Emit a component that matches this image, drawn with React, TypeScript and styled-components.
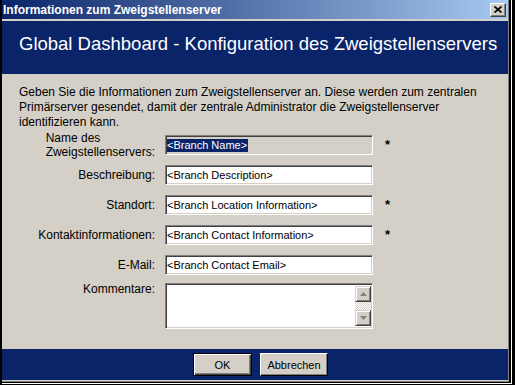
import styled, { createGlobalStyle } from "styled-components";

const GlobalStyle = createGlobalStyle`
  html, body {
    margin: 0;
    padding: 0;
    background: #000;
  }
  body {
    font-family: "Liberation Sans", Arial, sans-serif;
  }
`;

const fields = [
  { label: "Beschreibung:", value: "<Branch Description>", required: false },
  { label: "Standort:", value: "<Branch Location Information>", required: true },
  { label: "Kontaktinformationen:", value: "<Branch Contact Information>", required: true },
  { label: "E-Mail:", value: "<Branch Contact Email>", required: false },
];

const App = () => {
  return (
    <>
      <GlobalStyle />
      <Shell>
        <Highlight>
          <Shadow>
            <Edge>
              <TitleBar>
                <TitleText>Informationen zum Zweigstellenserver</TitleText>
                <CloseButton aria-label="Schließen">
                  <svg width="8" height="7" viewBox="0 0 8 7">
                    <path d="M0.5 0.5 L7.5 6.5 M7.5 0.5 L0.5 6.5" stroke="#000" strokeWidth="1.7" />
                  </svg>
                </CloseButton>
              </TitleBar>
              <TitleRule />
              <Banner>Global Dashboard - Konfiguration des Zweigstellenservers</Banner>
              <Body>
                <Intro>
                  Geben Sie die Informationen zum Zweigstellenserver an. Diese werden zum zentralen
                  Primärserver gesendet, damit der zentrale Administrator die Zweigstellenserver
                  identifizieren kann.
                </Intro>
                <Form>
                  <Label>
                    <LabelText>
                      Name des
                      <br />
                      Zweigstellenservers:
                    </LabelText>
                  </Label>
                  <SelectedField>
                    <Selection>&lt;Branch Name&gt;</Selection>
                  </SelectedField>
                  <Required>*</Required>

                  {fields.map((f) => (
                    <FieldRow key={f.label} {...f} />
                  ))}

                  <Label $top>
                    <LabelText>Kommentare:</LabelText>
                  </Label>
                  <CommentBox>
                    <CommentInput />
                    <ScrollBar>
                      <ScrollButton>
                        <svg width="7" height="4" viewBox="0 0 7 4">
                          <polygon points="3.5,0 7,4 0,4" fill="#808080" />
                        </svg>
                      </ScrollButton>
                      <ScrollTrack />
                      <ScrollButton>
                        <svg width="7" height="4" viewBox="0 0 7 4">
                          <polygon points="0,0 7,0 3.5,4" fill="#808080" />
                        </svg>
                      </ScrollButton>
                    </ScrollBar>
                  </CommentBox>
                  <span />
                </Form>
              </Body>
              <Footer>
                <Button $default $width={59}>OK</Button>
                <Button $width={68}>Abbrechen</Button>
              </Footer>
              <FooterRule />
            </Edge>
          </Shadow>
        </Highlight>
      </Shell>
    </>
  );
};

const FieldRow = ({ label, value, required }: { label: string; value: string; required: boolean }) => (
  <>
    <Label>
      <LabelText>{label}</LabelText>
    </Label>
    <Field defaultValue={value} />
    {required ? <Required>*</Required> : <span />}
  </>
);

// Fensterrahmen (klassischer Windows-Stil)
const Shell = styled.div`
  box-sizing: border-box;
  width: 515px;
  height: 385px;
  border-left: 2px solid #000;
  border-right: 3px solid #000;
  border-bottom: 1px solid #000;
  background: #000;
`;
const Highlight = styled.div`
  height: 100%;
  box-sizing: border-box;
  border-right: 1px solid #fff;
  border-bottom: 1px solid #fff;
`;
const Shadow = styled.div`
  height: 100%;
  box-sizing: border-box;
  border-right: 2px solid #000;
  border-bottom: 1px solid #000;
`;
const Edge = styled.div`
  height: 100%;
  box-sizing: border-box;
  border-right: 1px solid #808080;
  border-bottom: 1px solid #808080;
  display: flex;
  flex-direction: column;
  background: #d4d0c8;
`;

const TitleBar = styled.div`
  height: 19px;
  display: flex;
  align-items: center;
  justify-content: space-between;
  padding: 0 2px 0 1px;
  background: linear-gradient(to right, #0a246a, #a6caf0);
`;
const TitleText = styled.span`
  color: #fff;
  font-weight: bold;
  font-size: 12px;
  line-height: 14px;
`;
const CloseButton = styled.div`
  box-sizing: border-box;
  width: 16px;
  height: 14px;
  display: flex;
  align-items: center;
  justify-content: center;
  background: #d4d0c8;
  border-top: 1px solid #fff;
  border-left: 1px solid #fff;
  border-right: 1px solid #404040;
  border-bottom: 1px solid #404040;
  box-shadow: inset -1px -1px #808080;
`;
const TitleRule = styled.div`
  height: 2px;
  background: #d4d0c8;
`;

const Banner = styled.div`
  height: 53px;
  box-sizing: border-box;
  padding: 13px 0 0 17px;
  background: #0a246a;
  color: #fff;
  font-size: 18.5px;
  line-height: 19px;
  white-space: nowrap;
`;

const Body = styled.div`
  height: 275px;
  box-sizing: border-box;
  padding: 11px 10px 0 17px;
`;
const Intro = styled.p`
  margin: 0;
  font-size: 12px;
  line-height: 15px;
  color: #000;
`;

const Form = styled.div`
  display: grid;
  grid-template-columns: 136px 208px auto;
  grid-template-rows: repeat(5, 30px) auto;
  column-gap: 10px;
  align-items: center;
`;
const Label = styled.div<{ $top?: boolean }>`
  display: flex;
  justify-content: flex-end;
  align-self: ${(p) => (p.$top ? "start" : "center")};
  margin-top: ${(p) => (p.$top ? "2px" : "0")};
`;
const LabelText = styled.span`
  font-size: 12px;
  line-height: 14px;
  color: #000;
  white-space: nowrap;
`;

const sunken = `
  box-sizing: border-box;
  border-top: 1px solid #808080;
  border-left: 1px solid #808080;
  border-right: 1px solid #fff;
  border-bottom: 1px solid #fff;
  box-shadow: inset 1px 1px #404040, inset -1px -1px #d4d0c8;
`;

const Field = styled.input`
  ${sunken}
  width: 208px;
  height: 20px;
  margin: 0;
  padding: 0 0 0 1px;
  background: #fff;
  font-family: "Liberation Sans", Arial, sans-serif;
  font-size: 11px;
  color: #000;
  outline: none;
`;
const SelectedField = styled.div`
  ${sunken}
  width: 208px;
  height: 20px;
  display: flex;
  align-items: center;
  padding-left: 1px;
  background: #d4d0c8;
`;
const Selection = styled.span`
  background: #0a246a;
  color: #fff;
  font-size: 11px;
  line-height: 13px;
  padding-right: 1px;
`;
const Required = styled.span`
  font-size: 13px;
  font-weight: bold;
  line-height: 14px;
  color: #000;
  margin-left: 2px;
`;

const CommentBox = styled.div`
  ${sunken}
  align-self: start;
  margin-top: 3px;
  width: 208px;
  height: 46px;
  display: flex;
  padding: 2px 1px 2px 2px;
  background: #fff;
`;
const CommentInput = styled.textarea`
  flex: 1;
  border: none;
  resize: none;
  outline: none;
  margin: 0;
  padding: 0;
  font-family: "Liberation Sans", Arial, sans-serif;
  font-size: 11px;
  background: #fff;
`;
const ScrollBar = styled.div`
  width: 16px;
  display: flex;
  flex-direction: column;
`;
const ScrollButton = styled.div`
  box-sizing: border-box;
  height: 16px;
  display: flex;
  align-items: center;
  justify-content: center;
  background: #d4d0c8;
  border-top: 1px solid #d4d0c8;
  border-left: 1px solid #d4d0c8;
  border-right: 1px solid #404040;
  border-bottom: 1px solid #404040;
  box-shadow: inset 1px 1px #fff, inset -1px -1px #808080;
`;
const ScrollTrack = styled.div`
  flex: 1;
  background: repeating-conic-gradient(#d4d0c8 0% 25%, #fff 0% 50%) 0 0 / 2px 2px;
`;

const Footer = styled.div`
  height: 31px;
  display: flex;
  align-items: center;
  justify-content: center;
  gap: 8px;
  padding-left: 11px;
  background: #0a246a;
`;
const Button = styled.button<{ $default?: boolean; $width: number }>`
  box-sizing: border-box;
  width: ${(p) => p.$width}px;
  height: 23px;
  margin: 0;
  padding: 0;
  background: #d4d0c8;
  font-family: "Liberation Sans", Arial, sans-serif;
  font-size: 11px;
  color: #000;
  border-top: 1px solid ${(p) => (p.$default ? "#000" : "#fff")};
  border-left: 1px solid ${(p) => (p.$default ? "#000" : "#fff")};
  border-right: 1px solid #000;
  border-bottom: 1px solid #000;
  box-shadow: ${(p) =>
    p.$default
      ? "inset 1px 1px #fff, inset -1px -1px #404040, inset -2px -2px #808080"
      : "inset -1px -1px #808080"};
`;
const FooterRule = styled.div`
  height: 1px;
  background: #d4d0c8;
`;

export default App;
